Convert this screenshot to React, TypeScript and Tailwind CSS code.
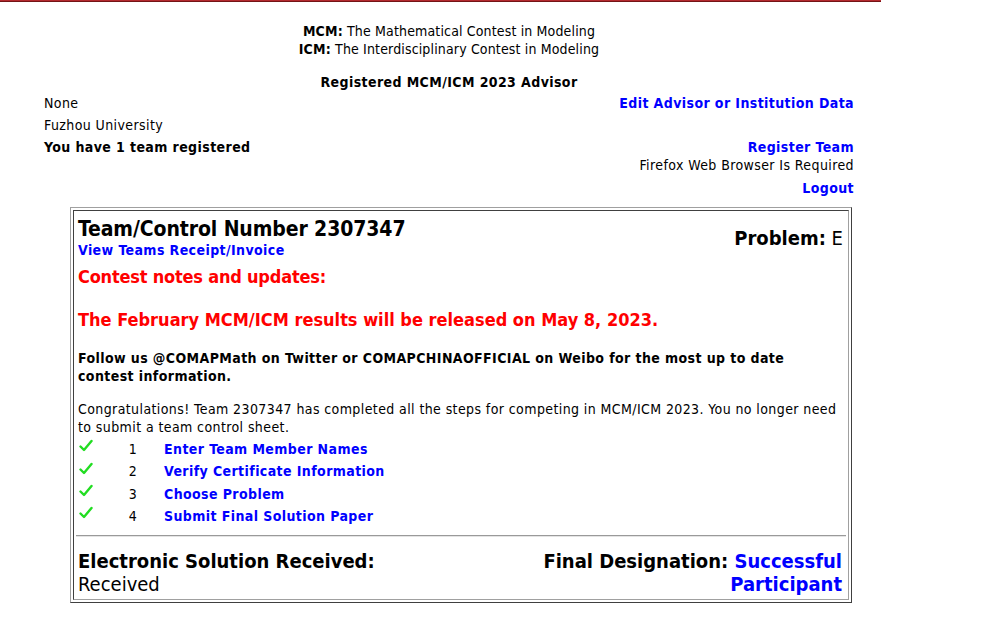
import React from "react";

function Check() {
  return (
    <svg width="14" height="14" viewBox="0 0 14 14" className="block">
      <path d="M1.5 7.5 L5 11 L12.5 2" fill="none" stroke="#22dd22" strokeWidth="2.4" strokeLinecap="round" strokeLinejoin="round" />
    </svg>
  );
}

const steps = [
  "Enter Team Member Names",
  "Verify Certificate Information",
  "Choose Problem",
  "Submit Final Solution Paper",
];

const rowH = ["h-[22px]", "h-[23px]", "h-[22px]", "h-[22px]"];

export default function App() {
  return (
    <div className="min-h-[638px] w-[992px] bg-white text-black font-[family-name:'DejaVu_Sans_Condensed','DejaVu_Sans',sans-serif] font-stretch-condensed text-[14px] tracking-[0.4px]">
      <div className="w-[881px] h-[2px] border-t border-t-[#b42a2f] border-b border-b-[#741416]" />
      <div className="ml-[44px] w-[810px]">
        <div className="pt-[20px] text-center leading-[18px] tracking-[0.15px]">
          <div><b>MCM:</b> The Mathematical Contest in Modeling</div>
          <div><b>ICM:</b> The Interdisciplinary Contest in Modeling</div>
        </div>
        <div className="mt-[15px] text-center font-bold leading-[18px]">Registered MCM/ICM 2023 Advisor</div>
        <div className="mt-[1px] flex justify-between">
          <div className="leading-[22px]">
            <div>None</div>
            <div>Fuzhou University</div>
            <div className="font-bold">You have 1 team registered</div>
          </div>
          <div className="text-right">
            <div className="leading-[22px] font-bold text-[#0000ff]">Edit Advisor or Institution Data</div>
            <div className="h-[22px]" />
            <div className="leading-[22px] font-bold text-[#0000ff]">Register Team</div>
            <div className="leading-[14px]">Firefox Web Browser Is Required</div>
            <div className="leading-[32px] font-bold text-[#0000ff]">Logout</div>
          </div>
        </div>
      </div>
      <div className="ml-[70px] mt-[3px] w-[782px] border border-t-[#a0a0a0] border-l-[#a0a0a0] border-r-[#404040] border-b-[#404040] p-[2px]">
        <div className="border border-t-[#404040] border-l-[#404040] border-r-[#a0a0a0] border-b-[#a0a0a0] px-[4px] pt-[8px] pb-[3px]">
          <div className="flex justify-between items-center">
            <div>
              <div className="text-[21px] tracking-[-0.1px] font-bold leading-[20px]">Team/Control Number 2307347</div>
              <div className="mt-[1px] leading-[20px] font-bold text-[#0000ff]">View Teams Receipt/Invoice</div>
            </div>
            <div className="text-[20px] tracking-normal leading-[22px] pr-[1px] mb-[3px]"><b>Problem:</b> E</div>
          </div>
          <div className="mt-[5px] text-[18px] tracking-[-0.2px] leading-[24px] font-bold text-[#ff0000]">Contest notes and updates:</div>
          <div className="mt-[19px] text-[18px] tracking-normal leading-[24px] font-bold text-[#ff0000]">The February MCM/ICM results will be released on May 8, 2023.</div>
          <div className="mt-[17px] leading-[18px] font-bold">Follow us @COMAPMath on Twitter or COMAPCHINAOFFICIAL on Weibo for the most up to date contest information.</div>
          <div className="mt-[15px] leading-[18px]">Congratulations! Team 2307347 has completed all the steps for competing in MCM/ICM 2023. You no longer need to submit a team control sheet.</div>
          <div className="mt-[2px]">
            {steps.map((s, i) => (
              <div key={s} className={`flex ${rowH[i]} items-center`}>
                <div className="w-[16px] pl-[1px] -mt-[6px]"><Check /></div>
                <div className="w-[70px] pl-[8px] text-center">{i + 1}</div>
                <div className="font-bold text-[#0000ff]">{s}</div>
              </div>
            ))}
          </div>
          <div className="-mx-[2px] mt-[8px] h-[2px] border-t border-t-[#9a9a9a] border-b border-b-[#e4e4e4]" />
          <div className="mt-[13px] flex justify-between text-[20px] tracking-normal leading-[23px]">
            <div>
              <div className="font-bold">Electronic Solution Received:</div>
              <div>Received</div>
            </div>
            <div className="text-right font-bold pr-[2px]">
              <div>Final Designation: <span className="text-[#0000ff]">Successful</span></div>
              <div className="text-[#0000ff]">Participant</div>
            </div>
          </div>
        </div>
      </div>
    </div>
  );
}
